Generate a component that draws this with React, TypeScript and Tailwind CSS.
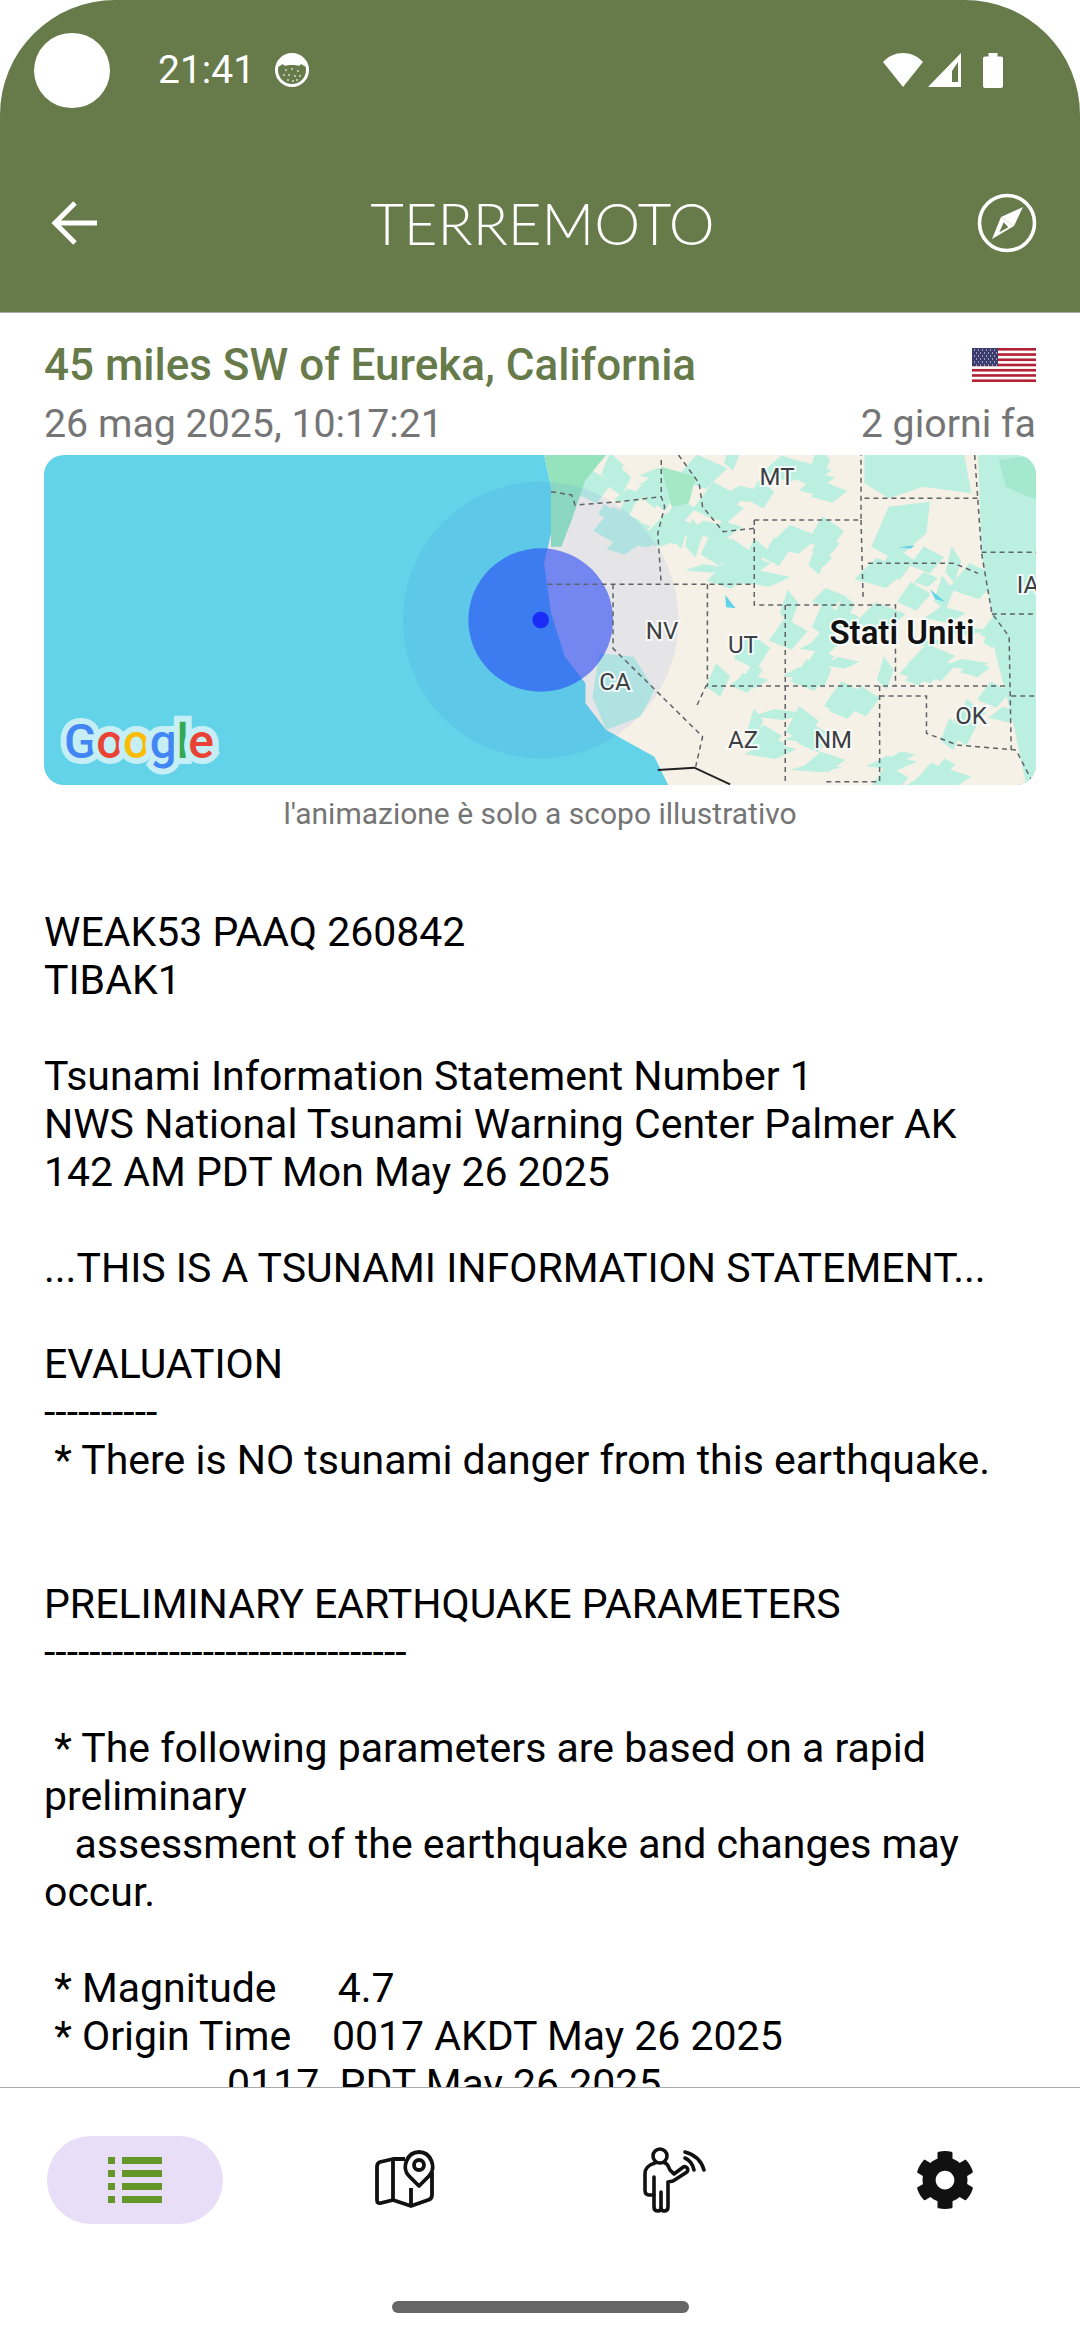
import { FaCog } from "react-icons/fa";

// big flat areas of vegetation, in the coordinates of the map's viewBox
const GREEN = [
  "1255,405 1400,405 1410,520 1340,500 1290,535 1255,490",
  "1420,405 1504,405 1504,1395 1490,1395 1470,1200 1445,1000 1440,880 1425,700",
  "1290,560 1350,545 1345,640 1300,720 1265,680",
  "870,1000 920,1010 950,1110 930,1190 880,1230 860,1130",
];

const PATCHES = [
  [900, 520, 60, 90, 10],
  [1000, 560, 50, 110, 12],
  [1130, 480, 70, 70, 10],
  [900, 660, 50, 70, 9],
  [1070, 700, 50, 80, 10],
  [1160, 690, 50, 50, 6],
  [1340, 780, 70, 60, 10],
  [1180, 950, 50, 120, 14],
  [1360, 980, 90, 110, 14],
  [1060, 1040, 40, 50, 6],
  [1090, 1250, 40, 80, 6],
  [1170, 1280, 30, 90, 6],
  [1330, 1330, 50, 60, 7],
  [1410, 1190, 50, 80, 7],
  [1220, 1130, 40, 30, 4],
];

// small seeded generator so the angular shards stay the same on every run
let seed = 11;
const rnd = () => {
  seed = (seed * 16807) % 2147483647;
  return seed / 2147483647;
};

const SHARDS = PATCHES.flatMap(([cx, cy, rx, ry, n]) =>
  Array.from({ length: n }, () => {
    const x = cx + (rnd() * 2 - 1) * rx;
    const y = cy + (rnd() * 2 - 1) * ry;
    const w = 12 + rnd() * 34;
    const h = 12 + rnd() * 48;
    return `${x},${y - h} ${x + w},${y - h * 0.2} ${x + w * 0.3},${y + h} ${x - w * 0.7},${y + h * 0.4}`;
  }),
);

const BORDERS = [
  "800,515 830,525 835,555 900,545 960,530",
  "960,420 960,530 965,560 955,640 960,793",
  "985,405 1015,490 1020,560 1050,635 1095,625",
  "1095,600 1250,600 1250,405",
  "1095,600 1095,855 1300,855 1300,1098",
  "1250,600 1253,830",
  "795,793 1095,793",
  "890,793 890,985 1020,1250 1010,1340",
  "1027,793 1027,1098",
  "1140,855 1140,1395",
  "1012,1155 1025,1098 1465,1098",
  "1255,535 1420,535",
  "1415,405 1425,700 1440,880 1465,950 1468,1290",
  "1425,697 1504,697",
  "1260,730 1385,730 1420,760",
  "1440,882 1504,882",
  "1277,1098 1277,1385 1195,1385",
  "1277,1128 1345,1128 1345,1240 1390,1275 1475,1290 1500,1390",
  "1468,1128 1504,1128",
];

const LABELS = [
  { text: "MT", cls: "left-[733px] top-[22px]" },
  { text: "NV", cls: "left-[618px] top-[176px]" },
  { text: "UT", cls: "left-[699px] top-[190px]" },
  { text: "CA", cls: "left-[571px] top-[227px]" },
  { text: "AZ", cls: "left-[699px] top-[285px]" },
  { text: "NM", cls: "left-[789px] top-[285px]" },
  { text: "OK", cls: "left-[927px] top-[261px]" },
  { text: "IA", cls: "left-[984px] top-[130px]" },
];

const BODY = `WEAK53 PAAQ 260842
TIBAK1

Tsunami Information Statement Number 1
NWS National Tsunami Warning Center Palmer AK
142 AM PDT Mon May 26 2025

...THIS IS A TSUNAMI INFORMATION STATEMENT...

EVALUATION
----------
 * There is NO tsunami danger from this earthquake.


PRELIMINARY EARTHQUAKE PARAMETERS
--------------------------------

 * The following parameters are based on a rapid preliminary
   assessment of the earthquake and changes may occur.

 * Magnitude      4.7
 * Origin Time    0017 AKDT May 26 2025
                  0117  PDT May 26 2025`;

const LAND = "790,405 1504,405 1504,1395 970,1395 950,1310 880,1230 850,1150 850,1090 820,1010 800,880 790,730 800,640 800,500";

const MapPreview = () => (
  <div className="relative mt-[5px] h-[330px] overflow-hidden rounded-[20px] bg-[#62d3e8]">
    <svg viewBox="64 405 1440 990" preserveAspectRatio="none" className="absolute inset-0 h-full w-full">
      <defs>
        <clipPath id="land">
          <polygon points={LAND} />
        </clipPath>
      </defs>
      <polygon points={LAND} fill="#f5f1e6" />
      <g clipPath="url(#land)">
        {GREEN.map((p) => (
          <polygon key={p} points={p} fill="#bbefe0" />
        ))}
        {SHARDS.map((p) => (
          <polygon key={p} points={p} fill="#bbefe0" />
        ))}
        <polygon points="790,405 880,405 850,480 830,600 815,680 800,680 800,500" fill="#95e3bc" />
        <polygon points="960,440 1010,470 1000,550 975,560" fill="#a5e8c5" />
        <polygon points="1450,420 1504,405 1504,540 1460,500" fill="#a5e8d0" />
      </g>
      <polygon points="1053,825 1068,865 1054,862" fill="#62d3e8" />
      <polygon points="1305,682 1328,676 1322,686" fill="#62d3e8" />
      <polygon points="1350,808 1372,845 1358,838" fill="#62d3e8" />
      <ellipse cx="785" cy="900" rx="200" ry="415" fill="#1e32f0" fillOpacity="0.07" />
      <ellipse cx="785" cy="900" rx="105" ry="215" fill="#2848f5" fillOpacity="0.6" />
      {BORDERS.map((p) => (
        <polyline key={p} points={p} fill="none" stroke="#5f6368" strokeWidth="1.5" strokeDasharray="5 4" vectorEffect="non-scaling-stroke" />
      ))}
      <polyline points="955,1350 1008,1343 1060,1393" fill="none" stroke="#202124" strokeWidth="2" vectorEffect="non-scaling-stroke" />
      <ellipse cx="785" cy="900" rx="12" ry="25" fill="#1a2cf5" />
    </svg>
    {LABELS.map((l) => (
      <span
        key={l.text}
        className={`absolute ${l.cls} -translate-x-1/2 -translate-y-1/2 text-[24px] leading-none text-[#3c4043] [paint-order:stroke] [-webkit-text-stroke:4px_#ffffffcc]`}
      >
        {l.text}
      </span>
    ))}
    <span className="absolute left-[858px] top-[177px] -translate-x-1/2 -translate-y-1/2 whitespace-nowrap text-[33px] leading-none font-semibold text-[#111] [paint-order:stroke] [-webkit-text-stroke:4px_#ffffffcc]">
      Stati Uniti
    </span>
    <div className="absolute bottom-[8px] left-[20px] flex text-[48px] leading-[70px] font-medium tracking-[-0.5px] [paint-order:stroke] [-webkit-text-stroke:12px_#c5eef5]">
      <span className="text-[#4285f4]">G</span>
      <span className="text-[#ea4335]">o</span>
      <span className="text-[#fbbc05]">o</span>
      <span className="text-[#4285f4]">g</span>
      <span className="text-[#34a853]">l</span>
      <span className="text-[#ea4335]">e</span>
    </div>
  </div>
);

const UsFlag = () => (
  <svg viewBox="0 0 64 34" className="h-[34px] w-[64px]">
    <rect width="64" height="34" fill="#fff" />
    {[0, 2, 4, 6, 8, 10, 12].map((i) => (
      <rect key={i} y={i * 2.615} width="64" height="2.615" fill="#b22234" />
    ))}
    <rect width="26" height="18" fill="#3c3b6e" />
    {[2, 5, 8, 11, 14, 17].map((y, r) =>
      [2, 6, 10, 14, 18, 22].map((x) => <rect key={`${x}-${y}`} x={x + (r % 2) * 2} y={y - 0.5} width="1" height="1" fill="#fff" />),
    )}
  </svg>
);

const App = () => {
  return (
    <div className="flex h-[2340px] w-[1080px] flex-col overflow-hidden bg-white font-['Roboto',sans-serif]">
      <header className="flex h-[313px] shrink-0 flex-col rounded-t-[115px] border-b border-[#aaa] bg-[#667a4a] text-white">
        <div className="flex h-[140px] items-center pl-[34px] pr-[77px]">
          <div className="h-[75px] w-[76px] rounded-full bg-white" />
          <span className="ml-[48px] text-[39px]">21:41</span>
          <svg viewBox="0 0 34 34" className="ml-[20px] h-[34px] w-[34px]">
            <circle cx="17" cy="17" r="15.5" fill="none" stroke="#fff" strokeWidth="3" />
            <path d="M3 14 C4 7 10 2 17 2 C24 2 30 7 31 14 L26 11 C25 14 22 12 17 12 C12 12 9 14 8 11 Z" fill="#fff" />
            {[
              [11, 17],
              [17, 16],
              [23, 18],
              [9, 22],
              [14, 22],
              [20, 23],
              [25, 23],
              [13, 27],
              [18, 28],
              [22, 27],
            ].map(([x, y]) => (
              <circle key={`${x}-${y}`} cx={x} cy={y} r="0.9" fill="#fff" fillOpacity="0.8" />
            ))}
          </svg>
          <div className="ml-auto flex items-center">
            <svg viewBox="0 0 40 34" className="h-[34px] w-[40px]">
              <path d="M0 9 C11 -3 29 -3 40 9 L20 34 Z" fill="#fff" />
            </svg>
            <svg viewBox="0 0 33 34" className="ml-[5px] h-[34px] w-[33px]">
              <path d="M33 0 V34 H0 Z M24 18 V29 H30 V9 Z" fill="#fff" fillRule="evenodd" />
            </svg>
            <svg viewBox="0 0 20 35" className="ml-[22px] h-[35px] w-[20px]">
              <path d="M5.5 0 H14.5 V3.5 H18 Q20 3.5 20 5.5 V33 Q20 35 18 35 H2 Q0 35 0 33 V5.5 Q0 3.5 2 3.5 H5.5 Z" fill="#fff" />
            </svg>
          </div>
        </div>
        <div className="flex flex-1 items-center justify-between pl-[51px] pr-[43px] pb-[6px]">
          <div className="w-[57px]">
            <svg viewBox="0 0 46 44" className="h-[44px] w-[46px]" fill="none" stroke="#fff" strokeWidth="5">
              <path d="M46 22 H4 M24 2 L4 22 L24 42" />
            </svg>
          </div>
          <h1 className="text-[58px] leading-none font-light font-['Lato',sans-serif]">TERREMOTO</h1>
          <svg viewBox="0 0 60 60" className="h-[60px] w-[60px]" fill="none">
            <circle cx="30" cy="30" r="27.5" stroke="#fff" strokeWidth="3.6" />
            <path d="M46 14 L37 33 L24 24 Z" fill="#fff" />
            <path d="M15 46 L24 24 L37 33 Z M26.7 29.3 L22.3 39.3 L31.3 34.3 Z" fill="#fff" fillRule="evenodd" />
          </svg>
        </div>
      </header>

      <main className="min-h-0 flex-1 overflow-hidden px-[44px]">
        <div className="mt-[28px] flex items-center justify-between">
          <h2 className="text-[44px] leading-[48px] font-medium text-[#667a4a]">45 miles SW of Eureka, California</h2>
          <UsFlag />
        </div>
        <div className="mt-[12px] flex justify-between text-[39.3px] leading-[46px] text-[#757575]">
          <span>26 mag 2025, 10:17:21</span>
          <span>2 giorni fa</span>
        </div>
        <div className="pt-[3px]">
          <MapPreview />
        </div>
        <p className="mt-[10px] text-center text-[30px] leading-[38px] text-[#757575]">l'animazione è solo a scopo illustrativo</p>
        <p className="mt-[75px] whitespace-pre-wrap text-[41px] leading-[48px] text-black">{BODY}</p>
      </main>

      <nav className="flex h-[253px] shrink-0 flex-col border-t border-[#aaa] bg-white">
        <div className="flex h-[136px] items-start pt-[48px]">
          <div className="ml-[47px] flex h-[88px] w-[176px] items-center justify-center rounded-full bg-[#e8def8]">
            <div className="flex w-[54px] flex-col gap-[6px]">
              {[0, 1, 2, 3].map((i) => (
                <div key={i} className="flex h-[7px] gap-[7px]">
                  <div className="w-[7px] bg-[#65962a]" />
                  <div className="flex-1 bg-[#65962a]" />
                </div>
              ))}
            </div>
          </div>
          <svg viewBox="0 0 60 60" className="ml-[152px] mt-[14px] h-[60px] w-[60px]" fill="none" stroke="#111" strokeWidth="3.8" strokeLinejoin="round">
            <path d="M30 9 L18 9 L5 12 Q2 13 2 17 V50 Q2 54 6 53 L18 50 L36 56 L53 50 Q57 49 57 45 V22" />
            <path d="M18 9 V50 M36 38 V56" />
            <path d="M44 36 L34 26 C26 18 32 2 44 2 C56 2 62 18 54 26 Z" fill="#fff" />
            <circle cx="44" cy="15" r="5" />
          </svg>
          <svg viewBox="0 0 90 80" className="ml-[195px] mt-[4px] h-[80px] w-[90px]" fill="none" stroke="#111" strokeWidth="3.6" strokeLinejoin="round" strokeLinecap="round">
            <circle cx="30" cy="16" r="7" />
            <path d="M25 23 C18 25 15 28 15 34 V50 Q15 55 19 55 H24 V67 Q24 71 28 71 Q31 71 31 67 V52 V67 Q31 71 34 71 Q38 71 38 67 V42 L43 41 L57 32 Q59 29 56 27 Q54 26 52 28 L44 34 L40 30 C38 26 38 24 35 23" />
            <path d="M24 37 V55" />
            <path d="M55 18 Q62 21 64 30" />
            <path d="M55 12 Q70 16 74 30" />
          </svg>
          <FaCog className="ml-[195px] mt-[14px] h-[60px] w-[60px] text-[#111]" />
        </div>
        <div className="mx-auto mt-[77px] h-[12px] w-[297px] rounded-full bg-[#666]" />
      </nav>
    </div>
  );
};

export default App;
